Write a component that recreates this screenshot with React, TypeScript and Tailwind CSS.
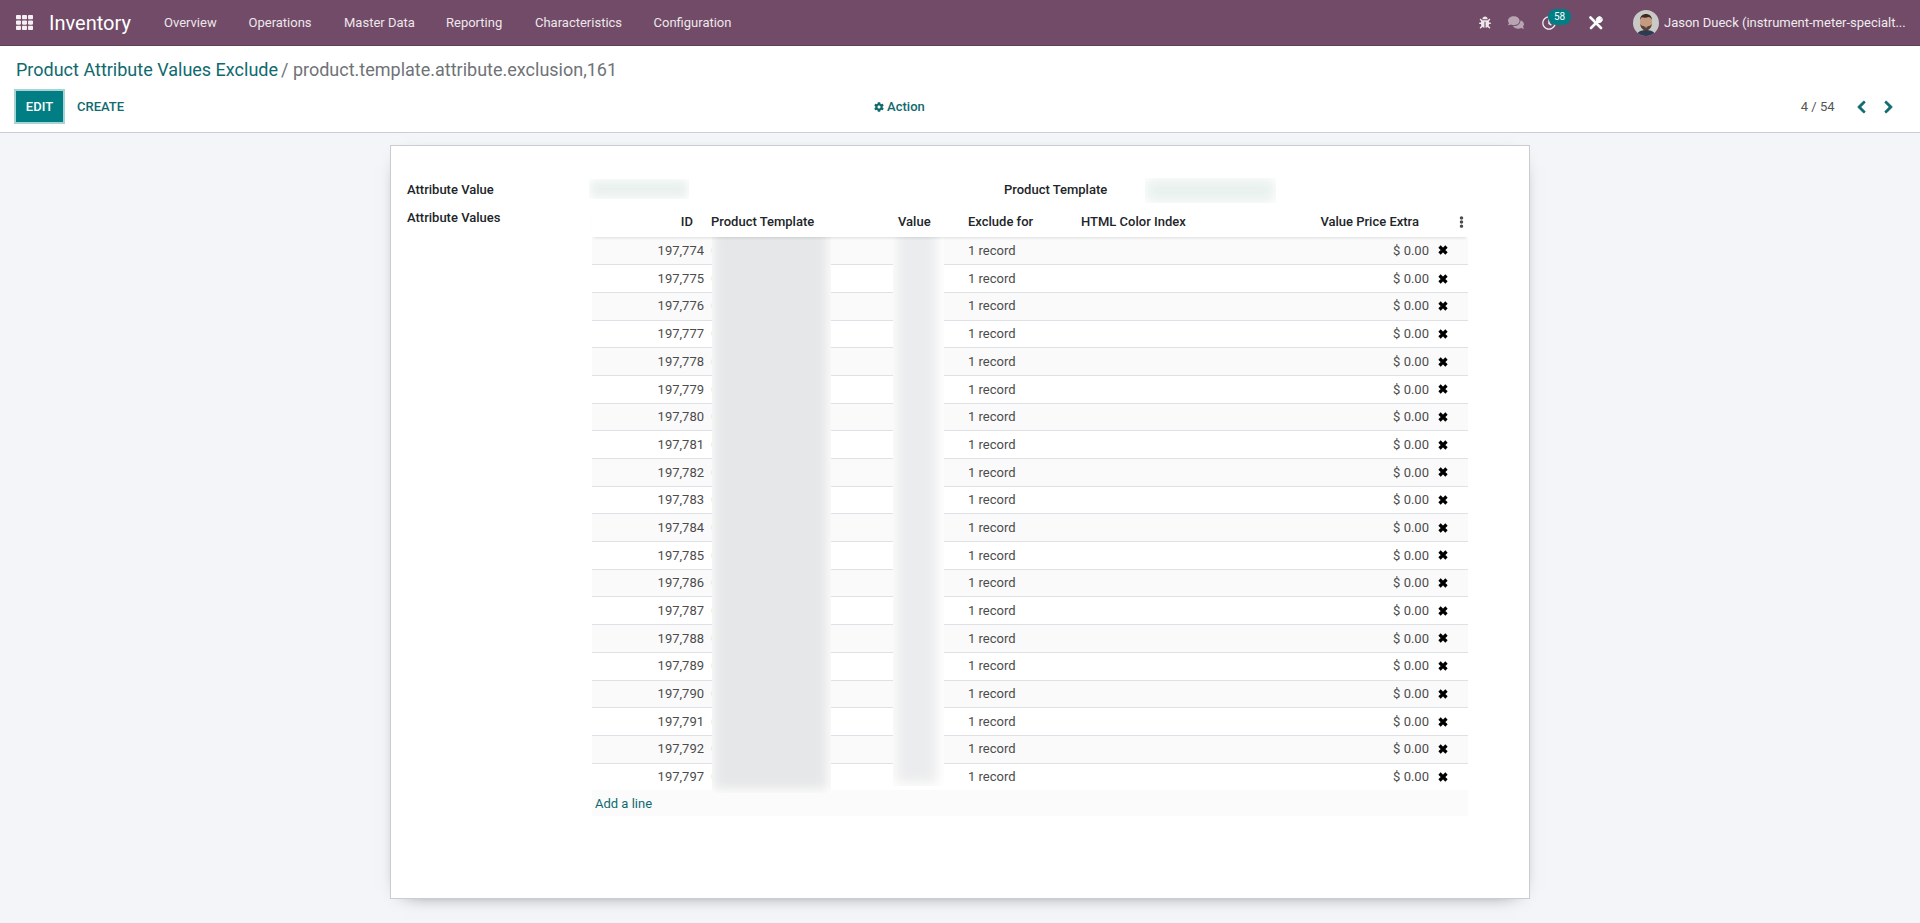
import React from "react";
import { FaTh, FaBug, FaComments, FaCog, FaChevronLeft, FaChevronRight, FaEllipsisV, FaRegClock } from "react-icons/fa";

const menu: [string, string][] = [
  ["Overview", "w-[84.5px]"],
  ["Operations", "w-[95.5px]"],
  ["Master Data", "w-[102px]"],
  ["Reporting", "w-[89px]"],
  ["Characteristics", "w-[118.5px]"],
  ["Configuration", "w-[90px]"],
];

const ids = [
  "197,774", "197,775", "197,776", "197,777", "197,778", "197,779", "197,780", "197,781", "197,782", "197,783",
  "197,784", "197,785", "197,786", "197,787", "197,788", "197,789", "197,790", "197,791", "197,792", "197,797",
];

const cols = "grid grid-cols-[116px_185px_72px_113px_356px_34px]";

function Avatar() {
  return (
    <svg viewBox="0 0 26 26" className="w-[26px] h-[26px] rounded-full shrink-0">
      <rect width="26" height="26" fill="#c9c9c6" />
      <path d="M3 26c1-4 5-6 10-6s9 2 10 6z" fill="#2d3a52" />
      <ellipse cx="13" cy="12.5" rx="6" ry="7.5" fill="#c69a80" />
      <path d="M7 10c0-4 3-6 6-6s6 2 6 6c-1-2-2-3-3.500-3-2 .8-5 .8-6.500.2C8 7.500 7.500 9 7 10z" fill="#3a2c24" />
      <path d="M7.200 14c.3 4 3 6.500 5.800 6.500s5.500-2.500 5.800-6.500c-1 1.500-2.500 2-3 2h-5.600c-.5 0-2-.5-3-2z" fill="#5a4334" />
      <path d="M11 16.500h4c-.5 1-3.500 1-4 0z" fill="#f2e6dc" />
    </svg>
  );
}

function Tools() {
  return (
    <svg viewBox="0 0 14 14" className="w-[14px] h-[14px] ml-[33px]" fill="none" stroke="#fff">
      <path d="M1.500 1.500L12 12" strokeWidth="2.600" strokeLinecap="round" />
      <path d="M2 12L9 5" strokeWidth="2.600" strokeLinecap="round" />
      <path d="M8.200 5.800A3 3 0 0 1 12.600 1.700L10.800 3.400L11.400 4L13 2.400A3 3 0 0 1 8.200 5.800z" fill="#fff" strokeWidth="1" />
    </svg>
  );
}

function Cross() {
  return (
    <svg viewBox="0 0 10 10" className="w-[10px] h-[10px]" fill="none" stroke="#000" strokeWidth="3.200">
      <path d="M1.500 1.500L8.500 8.500M8.500 1.500L1.500 8.500" />
    </svg>
  );
}

function Blur({ className, inner }: { className: string; inner: string }) {
  return (
    <div className={`absolute overflow-hidden bg-white ${className}`}>
      <div className={`absolute ${inner}`} />
    </div>
  );
}

export default function App() {
  return (
    <div className="h-[923px] overflow-hidden bg-[#f4f5f9] text-[13px] text-[#4c4c4c] font-['Roboto',sans-serif]">
      <nav className="h-[46px] bg-[#714b67] border-b border-[#5f3f57] flex items-center text-white">
        <FaTh className="ml-4 w-[17px] h-[17px] text-[#f4eff3]" />
        <span className="ml-[16px] text-[20px] w-[115px]">Inventory</span>
        {menu.map(([m, w]) => (
          <span key={m} className={`${w} text-[#ede7eb]`}>{m}</span>
        ))}
        <div className="ml-auto flex items-center relative">
          <FaBug className="w-[12px] h-[13px] text-[#eee8ec]" />
          <FaComments className="ml-[17px] w-[16px] h-[15px] text-[#b8a5b3]" />
          <div className="ml-[18px] relative w-[14px] h-[14px]">
            <FaRegClock className="w-[14px] h-[14px] text-[#f4eff3]" />
            <span className="absolute left-[6px] top-[-7px] w-[23px] h-[16px] rounded-full bg-[#017e84] text-[10px] leading-[16px] text-center text-white">58</span>
          </div>
          <Tools />
          <div className="ml-[30px] mr-[10px] flex items-center gap-[5px]">
            <Avatar />
            <span className="w-[246px] whitespace-nowrap text-[#f0ebef]">Jason Dueck (instrument-meter-specialt...</span>
          </div>
        </div>
      </nav>

      <header className="h-[87px] bg-white border-b border-[#cbcdd2] pl-4 relative">
        <div className="h-[46px] flex items-center text-[18px] whitespace-nowrap">
          <span className="text-[#0f6a6f]">Product Attribute Values Exclude</span>
          <span className="text-[#6f7378] ml-[3px]">/ product.template.attribute.exclusion,161</span>
        </div>
        <div className="flex items-center h-[33px] mt-[-2px]">
          <button className="w-[47px] h-[31px] bg-[#017e84] text-white font-medium text-[13px] ring-2 ring-[#a6d3d5]">EDIT</button>
          <span className="ml-[14px] text-[#0f6a6f] font-medium">CREATE</span>
          <div className="ml-[750px] flex items-center gap-[3px] text-[#0f6a6f] font-medium">
            <FaCog className="w-[10px] h-[10px]" />
            <span>Action</span>
          </div>
          <span className="ml-auto text-[#555]">4 / 54</span>
          <FaChevronLeft className="ml-[21px] w-[11px] h-[14px] text-[#0f6a6f] stroke-current stroke-[30]" />
          <FaChevronRight className="ml-[16.5px] mr-[26px] w-[11px] h-[14px] text-[#0f6a6f] stroke-current stroke-[30]" />
        </div>
      </header>

      <main className="mt-[12px] mx-auto w-[1140px] h-[754px] bg-white border border-[#c9ccd2] shadow-[0_5px_20px_-15px_#000] relative">
        <div className="flex h-[27px] mt-[30px] items-center text-[#212529] font-medium pl-[16px]">
          <span className="w-[184px]">Attribute Value</span>
          <span className="ml-[413px]">Product Template</span>
        </div>
        <div className="flex pl-[16px] mt-[2px]">
          <span className="w-[185px] pt-[3px] text-[#212529] font-medium leading-[20px]">Attribute Values</span>
          <div className="w-[876px]">
            <div className={`${cols} h-[31.5px] pt-[2px] items-center text-[#212529] font-medium relative z-10 shadow-[0_3px_3px_-2px_rgba(0,0,0,0.12)] bg-white`}>
              <span className="text-right pr-[15px]">ID</span>
              <span className="pl-[3px]">Product Template</span>
              <span className="pl-[5px]">Value</span>
              <span className="pl-[3px]">Exclude for</span>
              <span className="pl-[3px] pr-[15px] flex justify-between">
                <span>HTML Color Index</span>
                <span>Value Price Extra</span>
              </span>
              <span className="flex justify-end pr-[1.5px]"><FaEllipsisV className="w-[11px] h-[12px] text-[#4c4c4c]" /></span>
            </div>
            {ids.map((id, i) => (
              <div key={id} className={`${cols} h-[27.7px] items-center ${i ? "border-t border-[#dee2e6]" : ""} ${i % 2 === 0 ? "bg-[#fafafb]" : "bg-white"}`}>
                <span className="text-right pr-[4px]">{id}</span>
                <span className="pl-[3px] text-[#c8c8c8]">C</span>
                <span />
                <span className="pl-[3px]">1 record</span>
                <span className="text-right pr-[5px] col-start-5">$ 0.00</span>
                <span className="pl-[4px]"><Cross /></span>
              </div>
            ))}
            <div className="h-[26px] bg-[#fbfbfb] flex items-center pl-[3px] text-[#0f6a6f]">Add a line</div>
          </div>
        </div>
        <Blur className="left-[198px] top-[33px] w-[100px] h-[20px]" inner="inset-[1px] bg-[#e9f1ef] blur-[5px]" />
        <Blur className="left-[754px] top-[32px] w-[131px] h-[25px]" inner="inset-[1px] bg-[#e9f1ef] blur-[6px]" />
        <Blur className="left-[321px] top-[90px] w-[119px] h-[557px] z-0" inner="left-[1px] right-[3px] top-[-20px] bottom-[3px] bg-[#e6e7e8] blur-[6px]" />
        <Blur className="left-[502px] top-[90px] w-[51px] h-[550px] z-0" inner="left-[3px] right-[7px] top-[-20px] bottom-[3px] bg-[#ebeced] blur-[6px]" />
      </main>
    </div>
  );
}
